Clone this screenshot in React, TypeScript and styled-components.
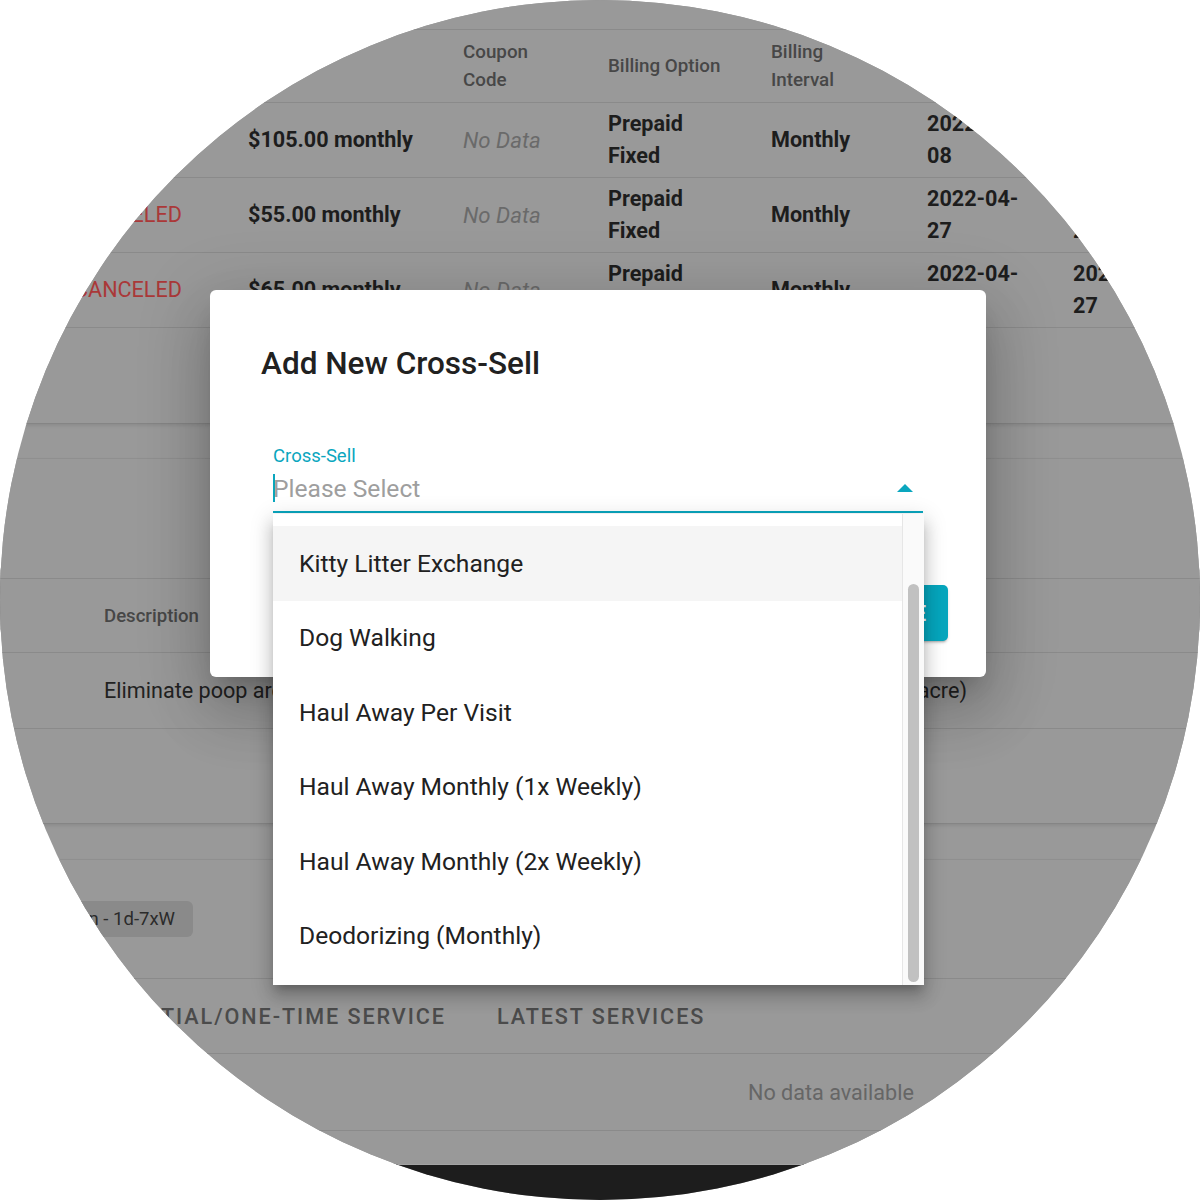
import styled, { createGlobalStyle } from "styled-components";

const TEAL = "#0aa6be";

type BillingRow = {
  status: string;
  price: string;
  option: string;
  interval: string;
  start: string;
  end: string;
};

const billingRows: BillingRow[] = [
  { status: "ACTIVE", price: "$105.00 monthly", option: "Prepaid Fixed", interval: "Monthly", start: "2022-03-08", end: "" },
  { status: "CANCELED", price: "$55.00 monthly", option: "Prepaid Fixed", interval: "Monthly", start: "2022-04-27", end: "2022-05-27" },
  { status: "CANCELED", price: "$65.00 monthly", option: "Prepaid Fixed", interval: "Monthly", start: "2022-04-27", end: "2022-04-27" },
];

const crossSells = [
  "Kitty Litter Exchange",
  "Dog Walking",
  "Haul Away Per Visit",
  "Haul Away Monthly (1x Weekly)",
  "Haul Away Monthly (2x Weekly)",
  "Deodorizing (Monthly)",
];

const App = () => {
  return (
    <>
      <GlobalStyle />
      <Frame>
        <Page>
          <Card>
            <Strip $height={30} />
            <TableRow $height={73}>
              <Cell $kind="head" />
              <Cell $kind="head" />
              <Cell $kind="head">Coupon Code</Cell>
              <Cell $kind="head">Billing Option</Cell>
              <Cell $kind="head">Billing Interval</Cell>
              <Cell $kind="head">Start Date</Cell>
              <Cell $kind="head">End Date</Cell>
            </TableRow>
            {billingRows.map((row, i) => (
              <TableRow key={i} $height={75}>
                <Cell $kind={row.status === "CANCELED" ? "alert" : "ok"}>{row.status}</Cell>
                <Cell $kind="strong">{row.price}</Cell>
                <Cell $kind="muted">No Data</Cell>
                <Cell $kind="strong">{row.option}</Cell>
                <Cell $kind="strong">{row.interval}</Cell>
                <Cell $kind="strong">{row.start}</Cell>
                <Cell $kind="strong">{row.end}</Cell>
              </TableRow>
            ))}
            <Strip $height={95} $plain />
          </Card>

          <Card $gap={36}>
            <Strip $height={120} />
            <DescRow $height={74}>
              <DescHead>Description</DescHead>
            </DescRow>
            <DescRow $height={76}>
              <DescText>
                Eliminate poop around your yard using a weekly pet deodorizing treatment (up to 1/2 acre)
              </DescText>
            </DescRow>
            <Strip $height={94} $plain />
          </Card>

          <Card $gap={37}>
            <ChipRow>
              <Chip>Weekly Plan - 1d-7xW</Chip>
            </ChipRow>
            <TabRow>
              <Tab>Initial/One-Time Service</Tab>
              <Tab>Latest Services</Tab>
            </TabRow>
            <EmptyRow>No data available</EmptyRow>
            <Strip $height={33} $plain />
          </Card>
          <FooterBar />
        </Page>

        <Dialog>
          <DialogTitle>Add New Cross-Sell</DialogTitle>
          <Field>
            <FieldLabel>Cross-Sell</FieldLabel>
            <Control>
              <Caret />
              <Placeholder>Please Select</Placeholder>
              <Arrow />
            </Control>
          </Field>
          <Actions>
            <TextButton>Cancel</TextButton>
            <SaveButton>Save</SaveButton>
          </Actions>
        </Dialog>

        <Menu>
          <MenuList>
            {crossSells.map((name, i) => (
              <MenuItem key={name} $active={i === 0}>
                {name}
              </MenuItem>
            ))}
          </MenuList>
          <ScrollTrack>
            <ScrollThumb />
          </ScrollTrack>
        </Menu>
      </Frame>
    </>
  );
};

export default App;

const GlobalStyle = createGlobalStyle`
  body {
    margin: 0;
    background: #ffffff;
  }
`;

const Frame = styled.div`
  position: relative;
  width: 1200px;
  height: 1200px;
  border-radius: 50%;
  overflow: hidden;
  background: #999999;
  font-family: Roboto, "Noto Sans", Arial, sans-serif;
`;

const Page = styled.div`
  display: flex;
  flex-direction: column;
  height: 100%;
`;

const Card = styled.section<{ $gap?: number }>`
  margin-top: ${(p) => p.$gap ?? 0}px;
  background: #999999;
  box-shadow: 0 -1px 0 rgba(0, 0, 0, 0.05), 0 1px 0 #858585, 0 2px 4px rgba(0, 0, 0, 0.12);
`;

const Strip = styled.div<{ $height: number; $plain?: boolean }>`
  box-sizing: border-box;
  height: ${(p) => p.$height}px;
  border-bottom: ${(p) => (p.$plain ? "none" : "1px solid #8a8a8a")};
`;

const TableRow = styled.div<{ $height: number }>`
  box-sizing: border-box;
  display: grid;
  grid-template-columns: 174px 215px 145px 163px 156px 146px 146px;
  align-items: center;
  height: ${(p) => p.$height}px;
  padding-left: 50px;
  border-bottom: 1px solid #8a8a8a;
`;

type CellKind = "head" | "strong" | "muted" | "alert" | "ok";

const cellColor: Record<CellKind, string> = {
  head: "#474747",
  strong: "#1d1d1d",
  muted: "#6a6a6a",
  alert: "#aa3838",
  ok: "#2f6e33",
};

const cellSize: Record<CellKind, number> = {
  head: 18.8,
  strong: 21.6,
  muted: 22.2,
  alert: 21.6,
  ok: 21.6,
};

const Cell = styled.div<{ $kind: CellKind }>`
  padding: 0 24px;
  font-size: ${(p) => cellSize[p.$kind]}px;
  line-height: ${(p) => (p.$kind === "head" ? 28 : 32)}px;
  font-weight: ${(p) => (p.$kind === "head" ? 500 : p.$kind === "strong" ? 700 : 400)};
  font-style: ${(p) => (p.$kind === "muted" ? "italic" : "normal")};
  color: ${(p) => cellColor[p.$kind]};
`;

const DescRow = styled.div<{ $height: number }>`
  box-sizing: border-box;
  display: flex;
  align-items: center;
  height: ${(p) => p.$height}px;
  padding-left: 104px;
  border-bottom: 1px solid #8a8a8a;
  white-space: nowrap;
`;

const DescHead = styled.span`
  font-size: 18.6px;
  font-weight: 500;
  color: #474747;
`;

const DescText = styled.span`
  font-size: 21.6px;
  color: #222222;
`;

const ChipRow = styled.div`
  box-sizing: border-box;
  display: flex;
  justify-content: flex-end;
  align-items: center;
  width: 193px;
  height: 119px;
  border-bottom: 1px solid #8a8a8a;
`;

const Chip = styled.span`
  flex-shrink: 0;
  display: inline-flex;
  align-items: center;
  height: 36px;
  padding: 0 18px;
  border-radius: 6px;
  background: #8a8a8a;
  color: #2b2b2b;
  font-size: 18.5px;
  white-space: nowrap;
`;

const TabRow = styled.div`
  box-sizing: border-box;
  display: flex;
  align-items: center;
  gap: 51px;
  height: 76px;
  padding-left: 128px;
  border-top: 1px solid #8a8a8a;
  border-bottom: 1px solid #8a8a8a;
  margin-top: -1px;
`;

const Tab = styled.span`
  flex-shrink: 0;
  font-size: 21.6px;
  font-weight: 500;
  letter-spacing: 1.93px;
  text-transform: uppercase;
  color: #4b4b4b;
  white-space: nowrap;
`;

const EmptyRow = styled.div`
  box-sizing: border-box;
  display: flex;
  align-items: center;
  height: 77px;
  padding-left: 748px;
  border-bottom: 1px solid #8a8a8a;
  font-size: 21.6px;
  color: #666666;
`;

const FooterBar = styled.div`
  flex: 1;
  background: #1d1d1d;
  border-top: 1px solid #a3a3a3;
`;

const Dialog = styled.div`
  position: absolute;
  left: 210px;
  top: 290px;
  box-sizing: border-box;
  width: 776px;
  height: 387px;
  display: flex;
  flex-direction: column;
  padding: 54px 38px 36px 51px;
  background: #ffffff;
  border-radius: 6px;
  box-shadow: 0 16px 22px -10px rgba(0, 0, 0, 0.2), 0 36px 57px 5px rgba(0, 0, 0, 0.14),
    0 14px 69px 12px rgba(0, 0, 0, 0.12);
`;

const DialogTitle = styled.h2`
  margin: 0;
  font-size: 31.5px;
  line-height: 40px;
  font-weight: 500;
  color: #212121;
`;

const Field = styled.div`
  display: flex;
  flex-direction: column;
  width: 650px;
  margin: 60px 0 0 12px;
`;

const FieldLabel = styled.label`
  font-size: 18.5px;
  line-height: 24px;
  color: ${TEAL};
`;

const Control = styled.div`
  box-sizing: border-box;
  display: flex;
  align-items: center;
  height: 45px;
  padding: 1px 0 4px;
  border-bottom: 2px solid ${TEAL};
`;

const Caret = styled.span`
  width: 2px;
  height: 28px;
  background: ${TEAL};
  margin-right: -2px;
`;

const Placeholder = styled.span`
  flex: 1;
  font-size: 24.6px;
  color: #9e9e9e;
`;

const Arrow = styled.span`
  width: 0;
  height: 0;
  margin: 0 10px 1px 0;
  border-left: 8px solid transparent;
  border-right: 8px solid transparent;
  border-bottom: 8px solid ${TEAL};
`;

const Actions = styled.div`
  margin-top: auto;
  display: flex;
  justify-content: flex-end;
  gap: 12px;
`;

const TextButton = styled.button`
  height: 56px;
  padding: 0 20px;
  border: none;
  background: transparent;
  color: ${TEAL};
  font-family: inherit;
  font-size: 21.6px;
  font-weight: 500;
  letter-spacing: 1.9px;
  text-transform: uppercase;
`;

const SaveButton = styled.button`
  height: 56px;
  padding: 0 20px;
  border: none;
  border-radius: 5px;
  background: #06a6bd;
  color: #ffffff;
  font-family: inherit;
  font-size: 21.6px;
  font-weight: 500;
  letter-spacing: 1.9px;
  text-transform: uppercase;
  box-shadow: 0 3px 2px -2px rgba(0, 0, 0, 0.2), 0 2px 3px 0 rgba(0, 0, 0, 0.14);
`;

const Menu = styled.div`
  position: absolute;
  left: 273px;
  top: 514px;
  width: 651px;
  height: 471px;
  display: flex;
  background: #ffffff;
  box-shadow: 0 7px 8px -4px rgba(0, 0, 0, 0.2), 0 12px 15px 2px rgba(0, 0, 0, 0.14),
    0 5px 21px 3px rgba(0, 0, 0, 0.12);
`;

const MenuList = styled.ul`
  flex: 1;
  margin: 0;
  padding: 12px 0 0;
  list-style: none;
`;

const MenuItem = styled.li<{ $active: boolean }>`
  display: flex;
  align-items: center;
  height: 74.5px;
  padding-left: 26px;
  background: ${(p) => (p.$active ? "#f5f5f5" : "transparent")};
  font-size: 24.6px;
  color: #212121;
`;

const ScrollTrack = styled.div`
  box-sizing: border-box;
  width: 22px;
  display: flex;
  flex-direction: column;
  padding: 70px 5px 3px 5px;
  background: #fafafa;
  border-left: 1px solid #e6e6e6;
`;

const ScrollThumb = styled.div`
  flex: 1;
  border-radius: 6px;
  background: #c1c1c1;
`;
